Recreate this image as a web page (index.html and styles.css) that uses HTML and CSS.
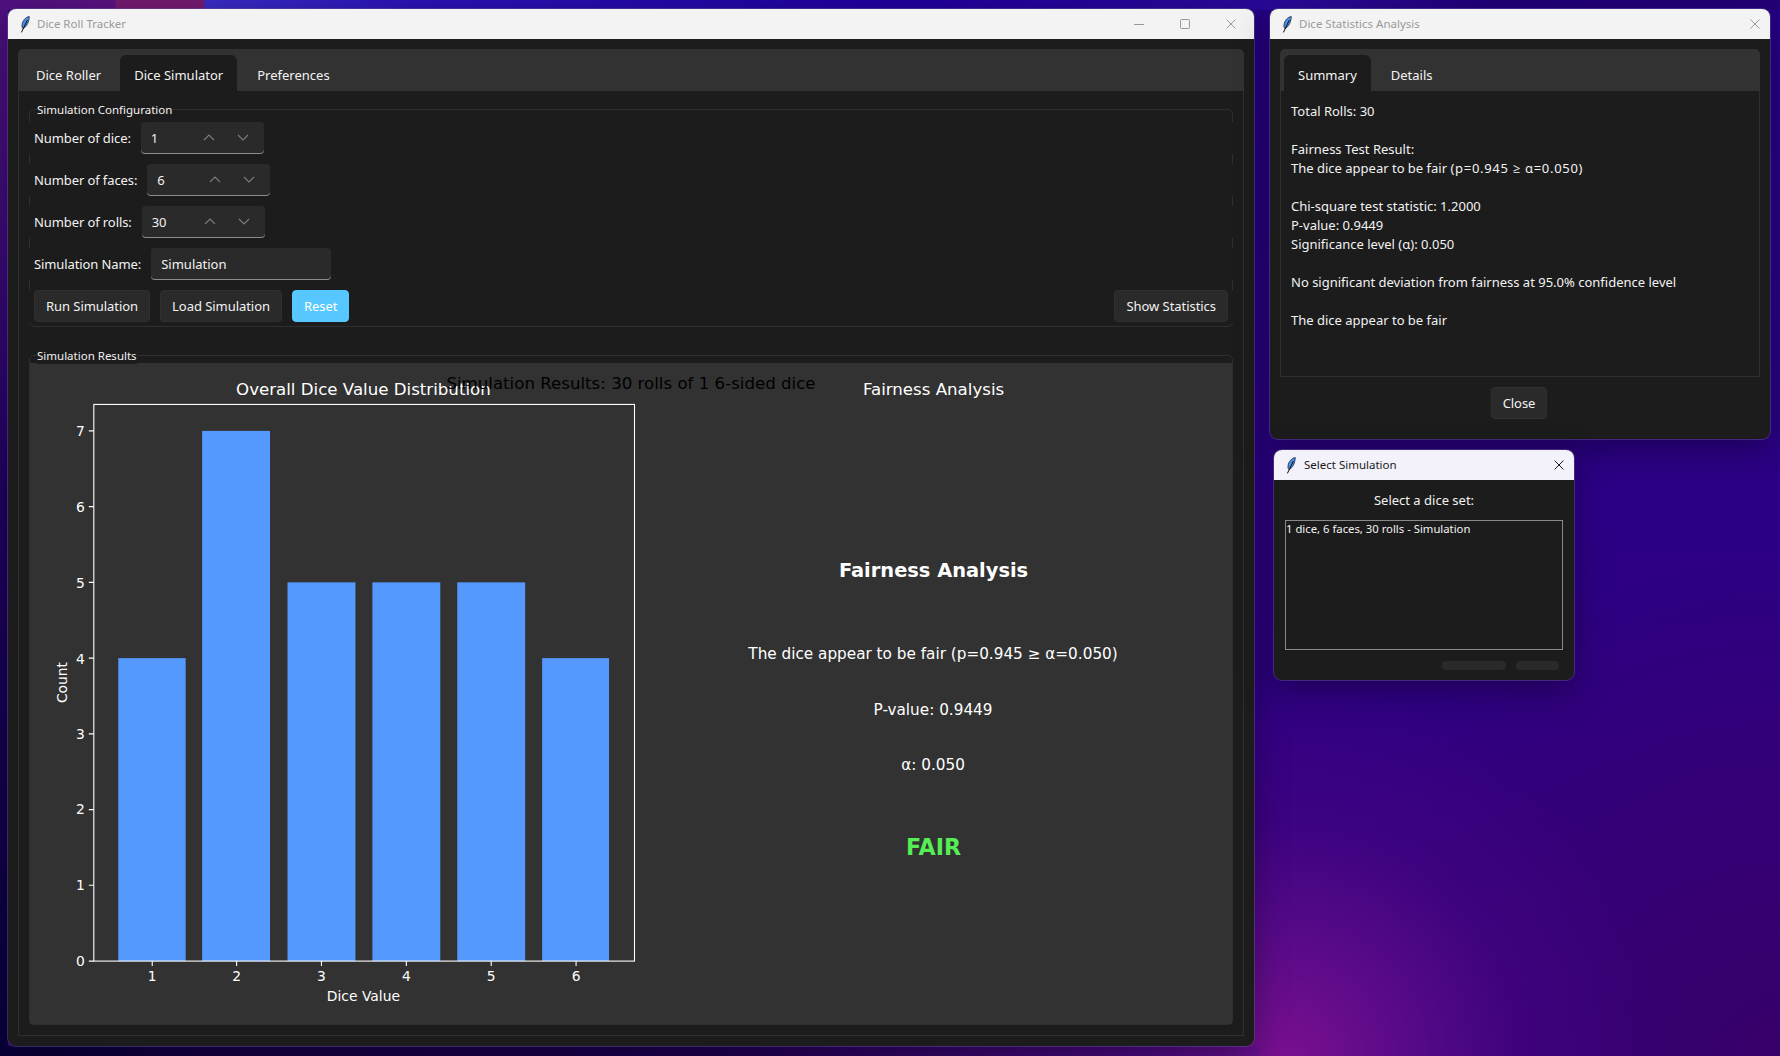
FILE: index.html
```html
<!DOCTYPE html>
<html lang="en">
<head>
    <meta charset="UTF-8">
    <title>Dice Roll Tracker</title>
    <link rel="stylesheet" href="styles.css">
</head>
<body>
<svg class="defs" width="0" height="0">
    <symbol id="feather" viewBox="0 0 10 17">
        <path d="M9.3 .6C5.6 1 2.6 4.6 2 9c-.2 1.6.2 3 1 3.6 2.6-1 5-4.5 5.7-8 .3-1.5.7-3 .6-4z" fill="#4b90e8" stroke="#1a2a44" stroke-width=".8"/>
        <path d="M1.4 16.4L7.4 4" stroke="#0c0c0c" stroke-width="1" fill="none"/>
    </symbol>
    <symbol id="chev_up" viewBox="0 0 12 7">
        <path d="M1 6l5-5 5 5" fill="none" stroke="#7c7c7c" stroke-width="1.1"/>
    </symbol>
    <symbol id="chev_down" viewBox="0 0 12 7">
        <path d="M1 1l5 5 5-5" fill="none" stroke="#7c7c7c" stroke-width="1.1"/>
    </symbol>
    <symbol id="cross" viewBox="0 0 10 10">
        <path d="M.5 .5l9 9M9.5 .5l-9 9" fill="none" stroke="currentColor" stroke-width="1"/>
    </symbol>
</svg>

<div class="win win_main">
    <div class="title_bar">
        <svg class="feather"><use href="#feather"/></svg>
        <span class="title_text">Dice Roll Tracker</span>
        <div class="win_controls">
            <div class="win_btn win_btn_wide"><svg width="10" height="10" viewBox="0 0 10 10"><path d="M0 5.5h10" stroke="#999" stroke-width="1"/></svg></div>
            <div class="win_btn win_btn_wide"><svg width="10" height="10" viewBox="0 0 10 10"><rect x=".5" y=".5" width="9" height="9" rx="1" fill="none" stroke="#999"/></svg></div>
            <div class="win_btn win_btn_wide"><svg width="10" height="10"><use href="#cross"/></svg></div>
        </div>
    </div>
    <div class="win_body">
        <div class="notebook">
            <div class="tabs">
                <div class="tab">Dice Roller</div>
                <div class="tab tab_active">Dice Simulator</div>
                <div class="tab">Preferences</div>
            </div>
            <div class="pane">
                <div class="group group_config">
                    <span class="group_label">Simulation Configuration</span>
                    <div class="row">
                        <span class="row_label">Number of dice:</span>
                        <div class="spin"><span class="spin_val">1</span><span class="spin_btn"><svg width="12" height="7"><use href="#chev_up"/></svg></span><span class="spin_btn"><svg width="12" height="7"><use href="#chev_down"/></svg></span></div>
                    </div>
                    <div class="row">
                        <span class="row_label">Number of faces:</span>
                        <div class="spin"><span class="spin_val">6</span><span class="spin_btn"><svg width="12" height="7"><use href="#chev_up"/></svg></span><span class="spin_btn"><svg width="12" height="7"><use href="#chev_down"/></svg></span></div>
                    </div>
                    <div class="row">
                        <span class="row_label">Number of rolls:</span>
                        <div class="spin"><span class="spin_val">30</span><span class="spin_btn"><svg width="12" height="7"><use href="#chev_up"/></svg></span><span class="spin_btn"><svg width="12" height="7"><use href="#chev_down"/></svg></span></div>
                    </div>
                    <div class="row">
                        <span class="row_label">Simulation Name:</span>
                        <div class="entry">Simulation</div>
                    </div>
                    <div class="row">
                        <div class="button">Run Simulation</div>
                        <div class="button">Load Simulation</div>
                        <div class="button button_accent">Reset</div>
                        <div class="button button_right">Show Statistics</div>
                    </div>
                </div>
                <div class="group group_results">
                    <span class="group_label">Simulation Results</span>
                    <div class="chart">
                        <svg class="chart_svg" viewBox="30 363 1202 662">
                            <g fill="#5599ff">
                                <rect x="117.5" y="658.6" width="67.5" height="303.4"/>
                                <rect x="201.5" y="431" width="68" height="531"/>
                                <rect x="287" y="582.7" width="68" height="379.3"/>
                                <rect x="372" y="582.7" width="68" height="379.3"/>
                                <rect x="457" y="582.7" width="68" height="379.3"/>
                                <rect x="542" y="658.6" width="67" height="303.4"/>
                            </g>
                            <rect x="93" y="404.5" width="541.5" height="557.5" fill="none" stroke="#fff" stroke-width="1.1"/>
                            <path d="M88 962h5M88 886.1h5M88 810.3h5M88 734.4h5M88 658.6h5M88 582.7h5M88 506.8h5M88 431h5M151.5 962v5M236 962v5M321 962v5M406 962v5M491 962v5M576 962v5" stroke="#fff" stroke-width="1.1"/>
                            <g class="tick_y">
                                <text x="84" y="967">0</text>
                                <text x="84" y="891">1</text>
                                <text x="84" y="815">2</text>
                                <text x="84" y="739.5">3</text>
                                <text x="84" y="664">4</text>
                                <text x="84" y="588">5</text>
                                <text x="84" y="512">6</text>
                                <text x="84" y="436">7</text>
                            </g>
                            <g class="tick_x">
                                <text x="151.5" y="982">1</text>
                                <text x="236" y="982">2</text>
                                <text x="321" y="982">3</text>
                                <text x="406" y="982">4</text>
                                <text x="491" y="982">5</text>
                                <text x="576" y="982">6</text>
                                <text x="363" y="1002">Dice Value</text>
                                <text x="66" y="683" transform="rotate(-90 66 683)">Count</text>
                            </g>
                            <text class="plot_title" x="363" y="395.5">Overall Dice Value Distribution</text>
                            <text class="plot_title" x="934" y="395.5">Fairness Analysis</text>
                            <text class="plot_title plot_suptitle" x="631" y="389">Simulation Results: 30 rolls of 1 6-sided dice</text>
                            <text class="fair_head" x="934" y="577">Fairness Analysis</text>
                            <text class="fair_line" x="933.5" y="659">The dice appear to be fair (p=0.945 ≥ α=0.050)</text>
                            <text class="fair_line" x="933.5" y="715.5">P-value: 0.9449</text>
                            <text class="fair_line" x="933.5" y="770.5">α: 0.050</text>
                            <text class="fair_verdict" x="934" y="856">FAIR</text>
                        </svg>
                    </div>
                </div>
            </div>
        </div>
    </div>
</div>

<div class="win win_stats">
    <div class="title_bar">
        <svg class="feather"><use href="#feather"/></svg>
        <span class="title_text">Dice Statistics Analysis</span>
        <div class="win_controls">
            <div class="win_btn"><svg width="10" height="10"><use href="#cross"/></svg></div>
        </div>
    </div>
    <div class="win_body">
        <div class="notebook">
            <div class="tabs tabs_inset">
                <div class="tab tab_active">Summary</div>
                <div class="tab">Details</div>
            </div>
            <div class="stats_text">Total Rolls: 30

Fairness Test Result:
The dice appear to be fair <span class="formula">(p=0.945 ≥ α=0.050)</span>

Chi-square test statistic: 1.2000
P-value: 0.9449
Significance level (α): 0.050

No significant deviation from fairness at 95.0% confidence level

The dice appear to be fair</div>
        </div>
        <div class="close_row"><div class="button">Close</div></div>
    </div>
</div>

<div class="win win_select">
    <div class="title_bar title_bar_active">
        <svg class="feather"><use href="#feather"/></svg>
        <span class="title_text">Select Simulation</span>
        <div class="win_controls">
            <div class="win_btn"><svg width="10" height="10"><use href="#cross"/></svg></div>
        </div>
    </div>
    <div class="select_body">
        <div class="select_label">Select a dice set:</div>
        <div class="listbox">1 dice, 6 faces, 30 rolls - Simulation</div>
        <div class="select_actions">
            <div class="pill pill_long"></div>
            <div class="pill"></div>
        </div>
    </div>
</div>
</body>
</html>
```

FILE: styles.css
```css
* {
    box-sizing: border-box;
    margin: 0;
    padding: 0;
}
html, body {
    height: 100%;
}
body {
    position: relative;
    overflow: hidden;
    font-family: "Noto Sans", "Open Sans", sans-serif;
    font-size: 13px;
    color: #f2f2f2;
    background:
        linear-gradient(90deg, #4f1080 0, #5a1280 115px, #741a70 116px, #741a70 204px, #3a2cc4 205px, #2a12b4 420px, #20009c 900px, #2a0a98 1300px, #200078 1500px, #240078 1780px) 0 0 / 100% 10px no-repeat,
        linear-gradient(180deg, #4f1080 0, #3a0a78 250px, #1f0060 500px, #08003a 1056px) 0 0 / 8px 100% no-repeat,
        linear-gradient(90deg, #08003a 0, #150045 200px, #1e0050 700px, #4a0a80 1150px, #6a1090 1260px) 0 100% / 1260px 10px no-repeat,
        radial-gradient(circle 380px at 1285px 1060px, #7a1090 0, #580a88 32%, rgba(70, 5, 130, .55) 62%, rgba(50, 0, 120, 0) 100%),
        radial-gradient(circle 500px at 1780px 1056px, #37006a 0, rgba(45, 0, 110, 0) 100%),
        linear-gradient(180deg, #250088 0, #2c0085 500px, #34007f 1056px);
}
.defs {
    position: absolute;
}

/* windows sit freely on the desktop */
.win {
    position: absolute;
    display: flex;
    flex-direction: column;
    background: #1c1c1c;
    border-radius: 8px;
    overflow: hidden;
    box-shadow: 0 0 0 1px rgba(95, 75, 150, .55), 0 10px 34px rgba(0, 0, 0, .35);
}
.win_main {
    left: 8px;
    top: 9px;
    width: 1246px;
    height: 1037px;
}
.win_stats {
    left: 1270px;
    top: 9px;
    width: 500px;
    height: 430px;
}
.win_select {
    left: 1274px;
    top: 450px;
    width: 300px;
    height: 230px;
}
.title_bar {
    display: flex;
    align-items: center;
    flex: none;
    height: 30px;
    padding-left: 12px;
    background: #f3f3f3;
    color: #9a9a9a;
    font-size: 11.5px;
}
.title_bar_active {
    background: #f3f1f9;
    color: #1a1a1a;
}
.title_bar_active .feather {
    margin-right: 8px;
}
.title_text {
    margin-top: -1px;
}
.feather {
    width: 10px;
    height: 17px;
    margin-right: 7px;
    flex: none;
}
.win_controls {
    display: flex;
    margin-left: auto;
}
.win_btn {
    display: flex;
    align-items: center;
    justify-content: center;
    width: 30px;
    height: 30px;
}
.win_btn_wide {
    width: 46px;
}
.win_body {
    display: flex;
    flex-direction: column;
    flex: 1;
    min-height: 0;
    padding: 10px;
}

/* notebook */
.notebook {
    display: flex;
    flex-direction: column;
    flex: 1;
    min-height: 0;
}
.win_stats .notebook {
    flex: none;
    height: 328px;
}
.tabs {
    display: flex;
    flex: none;
    align-items: flex-end;
    height: 42px;
    background: #323232;
    border-radius: 5px 5px 0 0;
}
.tabs_inset {
    padding-left: 4px;
}
.tab {
    display: flex;
    align-items: center;
    height: 36px;
    padding: 4px 19px 0 18px;
}
.tab_active {
    padding: 4px 14px 0;
    background: #1c1c1c;
    border-radius: 6px 6px 0 0;
}
.tab_active + .tab {
    padding-left: 20px;
}
.pane {
    display: flex;
    flex-direction: column;
    flex: 1;
    min-height: 0;
    padding: 18px 10px 10px;
    border: 1px solid #2f2f2f;
    border-top: 0;
}
.group {
    position: relative;
    border: 1px solid #2f2f2f;
    border-radius: 5px;
}
.group_label {
    position: absolute;
    left: 7px;
    top: -8px;
    background: #1c1c1c;
    font-size: 11.5px;
    line-height: 16px;
}
.group_config {
    flex: none;
    padding: 12px 4px 4px;
    margin-bottom: 28px;
}
.group_results {
    display: flex;
    flex: 1;
    min-height: 0;
    padding-top: 7px;
}
.row {
    display: flex;
    align-items: center;
    gap: 10px;
    height: 32px;
    margin: 0 -5px 10px;
    padding: 0 5px;
    background: #1c1c1c;
}
.row:last-child {
    margin-bottom: 0;
}
.row_label {
    letter-spacing: -.1px;
}
.spin, .entry {
    display: flex;
    align-items: center;
    height: 32px;
    padding-left: 10px;
    background: #2a2a2a;
    border-radius: 4px;
    box-shadow: inset 0 -1px 0 #8c8c8c;
}
.spin {
    width: 123px;
    padding-right: 4px;
}
.spin_val {
    flex: 1;
}
.spin_btn {
    display: flex;
    justify-content: center;
    width: 34px;
    margin-top: -2px;
}
.entry {
    width: 180px;
}
.button {
    display: flex;
    align-items: center;
    height: 32px;
    padding: 0 11px;
    background: #2a2a2a;
    border: 1px solid #303030;
    border-radius: 4px;
    letter-spacing: -.05px;
}
.button_accent {
    background: #57c8ff;
    border-color: #57c8ff;
    color: #fff;
}
.button_right {
    margin-left: auto;
}

/* plots */
.chart {
    flex: 1;
    background: #323232;
}
.chart_svg {
    display: block;
    width: 100%;
    height: 100%;
    font-family: "DejaVu Sans", sans-serif;
    fill: #fff;
}
.tick_y text {
    font-size: 13.9px;
    text-anchor: end;
}
.tick_x text {
    font-size: 13.9px;
    text-anchor: middle;
}
.plot_title {
    font-size: 16.67px;
    text-anchor: middle;
}
.plot_suptitle {
    fill: #000;
}
.fair_head {
    font-size: 19.44px;
    font-weight: 700;
    text-anchor: middle;
}
.fair_line {
    font-size: 15.28px;
    text-anchor: middle;
}
.fair_verdict {
    font-size: 22.2px;
    font-weight: 700;
    fill: #55ee55;
    text-anchor: middle;
}

/* statistics dialog */
.stats_text {
    flex: 1;
    padding: 11px 10px;
    line-height: 19px;
    white-space: pre-line;
    border: 1px solid #2f2f2f;
    border-top: 0;
}
.formula {
    letter-spacing: .7px;
}
.close_row {
    display: flex;
    justify-content: center;
    padding: 10px 2px 0 0;
}

/* select dialog */
.select_body {
    display: flex;
    flex-direction: column;
    flex: 1;
    padding: 11px 11px 10px;
}
.select_label {
    height: 18px;
    margin-bottom: 11px;
    line-height: 18px;
    text-align: center;
}
.listbox {
    height: 130px;
    border: 1px solid #8a8a8a;
    font-size: 11.3px;
    line-height: 15px;
}
.select_actions {
    display: flex;
    justify-content: flex-end;
    gap: 10px;
    margin-top: 11px;
    padding-right: 4px;
}
.pill {
    width: 43px;
    height: 9px;
    background: #2a2a2a;
    border-radius: 4px;
}
.pill_long {
    width: 64px;
}
```
